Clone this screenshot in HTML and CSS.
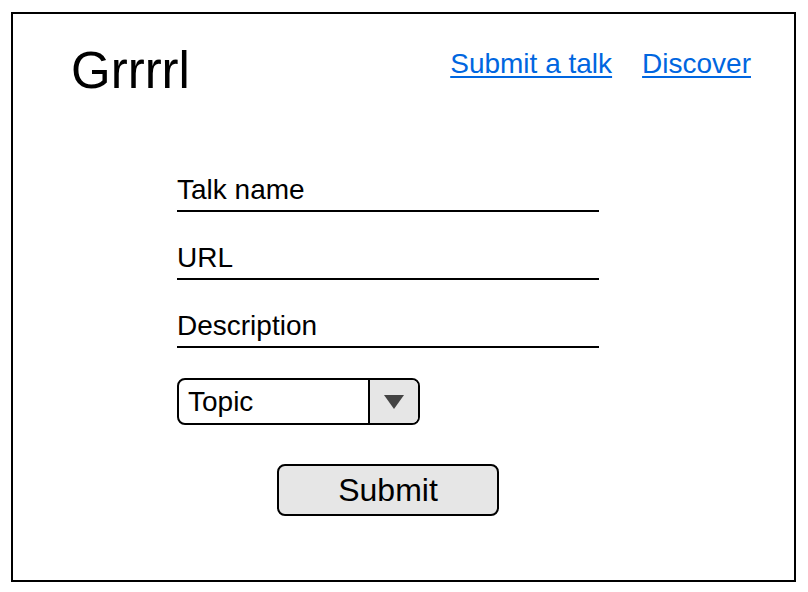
FILE: index.html
```html
<!DOCTYPE html>
<html lang="en">
<head>
<meta charset="utf-8">
<title>Grrrrl</title>
<link rel="stylesheet" href="styles.css">
</head>
<body>
<div class="frame">
  <header class="header">
    <div class="brand">Grrrrl</div>
    <nav class="nav">
      <a href="#" class="nav-link">Submit a talk</a>
      <a href="#" class="nav-link">Discover</a>
    </nav>
  </header>
  <form class="form">
    <div class="field">Talk name</div>
    <div class="field">URL</div>
    <div class="field">Description</div>
    <div class="select">
      <span class="select-label">Topic</span>
      <span class="select-arrow"><svg width="20" height="14" viewBox="0 0 20 14"><polygon points="0,0 20,0 10,14" fill="#444"/></svg></span>
    </div>
    <div class="actions">
      <button type="button" class="submit">Submit</button>
    </div>
  </form>
</div>
</body>
</html>
```

FILE: styles.css
```css
* { box-sizing: border-box; }
html, body { margin: 0; padding: 0; background: #fff; }
body {
  font-family: "Liberation Sans", Arial, Helvetica, sans-serif;
  color: #000;
}
.frame {
  margin: 12px 12px 10px 11px;
  width: 785px;
  height: 570px;
  border: 2px solid #000;
}
.header {
  display: flex;
  justify-content: space-between;
  align-items: flex-start;
  padding: 29px 43px 0 58px;
}
.brand {
  font-size: 51px;
  line-height: 1;
  margin-top: 2px;
}
.nav {
  display: flex;
  gap: 30px;
  margin-top: 7px;
}
.nav-link {
  font-size: 28px;
  line-height: 1;
  color: #0066e0;
  text-decoration: underline;
  text-decoration-thickness: 2px;
  text-underline-offset: 3px;
}
.form {
  width: 422px;
  margin: 78px 0 0 164px;
  display: flex;
  flex-direction: column;
}
.field {
  font-size: 28px;
  line-height: 1;
  padding-top: 2px;
  padding-bottom: 6px;
  border-bottom: 2px solid #000;
  margin-bottom: 30px;
}
.select {
  display: flex;
  width: 243px;
  height: 47px;
  border: 2px solid #000;
  border-radius: 8px;
  overflow: hidden;
  font-size: 28px;
}
.select-label {
  flex: 1;
  display: flex;
  align-items: center;
  padding-left: 9px;
  line-height: 1;
}
.select-arrow {
  width: 50px;
  border-left: 2px solid #000;
  background: #e6e6e6;
  display: flex;
  align-items: center;
  justify-content: center;
}
.actions {
  display: flex;
  justify-content: center;
  margin-top: 39px;
}
.submit {
  width: 222px;
  height: 52px;
  border: 2px solid #000;
  border-radius: 8px;
  background: #e6e6e6;
  font-family: "Liberation Sans", Arial, Helvetica, sans-serif;
  font-size: 32px;
  color: #000;
  padding: 0;
  line-height: 1;
}
```
